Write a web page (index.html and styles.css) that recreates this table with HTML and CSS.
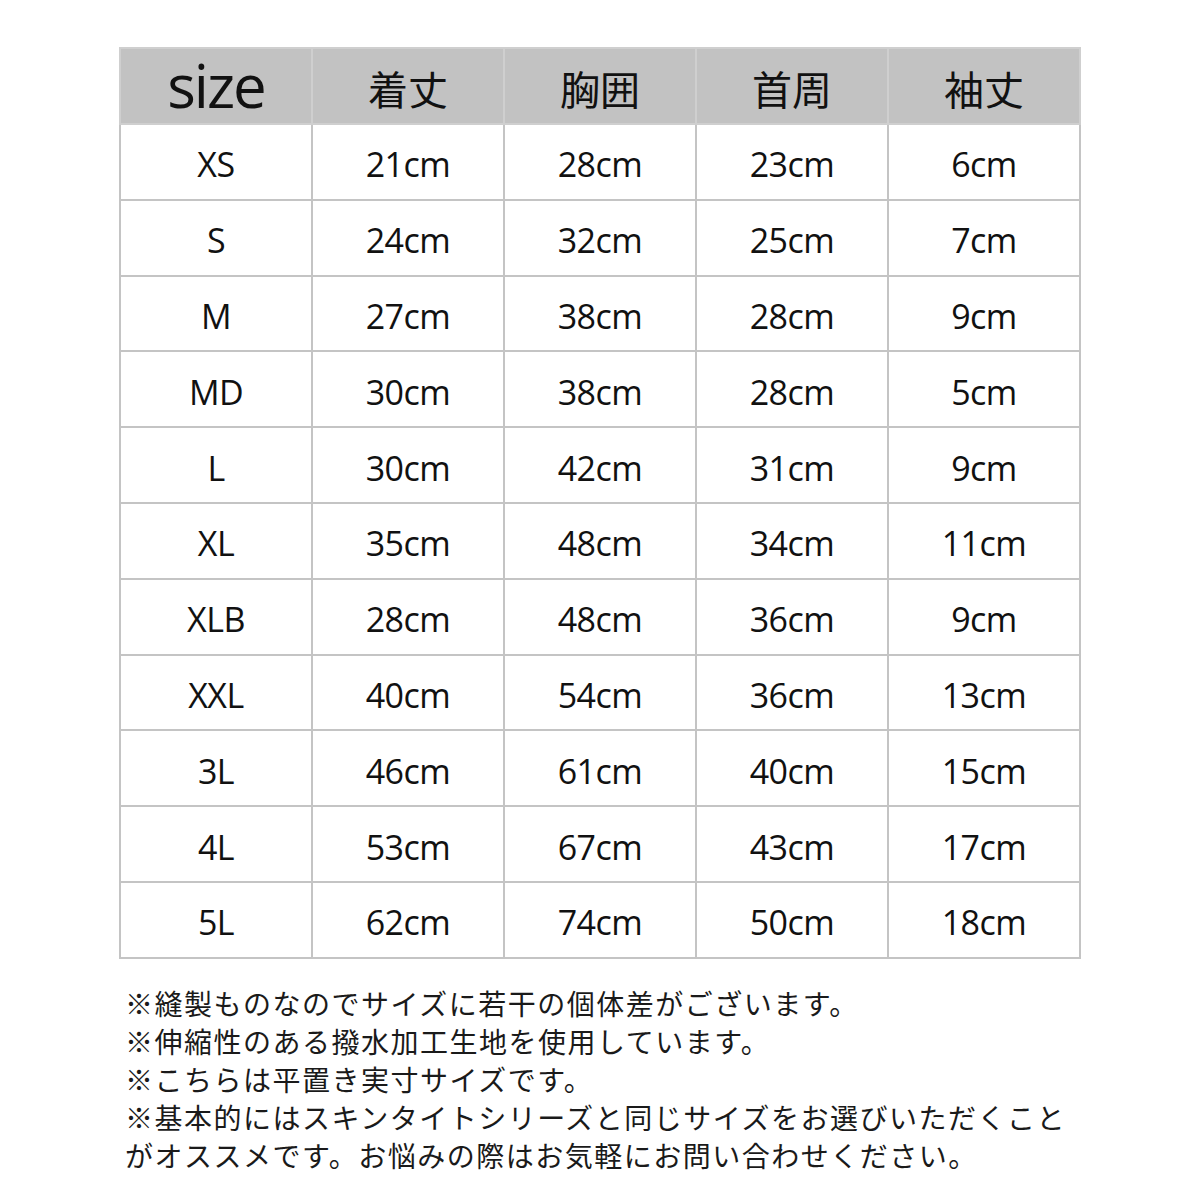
FILE: index.html
```html
<!DOCTYPE html>
<html lang="ja">
<head>
<meta charset="utf-8">
<title>サイズ表</title>
<link rel="stylesheet" href="styles.css">
</head>
<body>
<main class="page">
  <table class="size-table">
    <thead>
      <tr>
        <th class="h-size">size</th>
        <th>着丈</th>
        <th>胸囲</th>
        <th>首周</th>
        <th>袖丈</th>
      </tr>
    </thead>
    <tbody>
      <tr><td>XS</td><td>21cm</td><td>28cm</td><td>23cm</td><td>6cm</td></tr>
      <tr><td>S</td><td>24cm</td><td>32cm</td><td>25cm</td><td>7cm</td></tr>
      <tr><td>M</td><td>27cm</td><td>38cm</td><td>28cm</td><td>9cm</td></tr>
      <tr><td>MD</td><td>30cm</td><td>38cm</td><td>28cm</td><td>5cm</td></tr>
      <tr><td>L</td><td>30cm</td><td>42cm</td><td>31cm</td><td>9cm</td></tr>
      <tr><td>XL</td><td>35cm</td><td>48cm</td><td>34cm</td><td>11cm</td></tr>
      <tr><td>XLB</td><td>28cm</td><td>48cm</td><td>36cm</td><td>9cm</td></tr>
      <tr><td>XXL</td><td>40cm</td><td>54cm</td><td>36cm</td><td>13cm</td></tr>
      <tr><td>3L</td><td>46cm</td><td>61cm</td><td>40cm</td><td>15cm</td></tr>
      <tr><td>4L</td><td>53cm</td><td>67cm</td><td>43cm</td><td>17cm</td></tr>
      <tr><td>5L</td><td>62cm</td><td>74cm</td><td>50cm</td><td>18cm</td></tr>
    </tbody>
  </table>
  <div class="notes">
    <p>※縫製ものなのでサイズに若干の個体差がございます。</p>
    <p>※伸縮性のある撥水加工生地を使用しています。</p>
    <p>※こちらは平置き実寸サイズです。</p>
    <p>※基本的にはスキンタイトシリーズと同じサイズをお選びいただくこと<br>がオススメです。お悩みの際はお気軽にお問い合わせください。</p>
  </div>
</main>
</body>
</html>
```
FILE: styles.css
```css
html, body {
  margin: 0;
  padding: 0;
  background: #ffffff;
}

.page {
  padding: 47px 0 0 119px;
  color: #111111;
}

.size-table {
  border-collapse: collapse;
  table-layout: fixed;
  width: 962px;
  font-family: "Open Sans", "Noto Sans CJK JP", sans-serif;
}

.size-table th,
.size-table td {
  border: 2px solid #c4c4c4;
  text-align: center;
  vertical-align: middle;
  padding: 0;
  width: 20%;
}

.size-table th {
  background: #c2c2c2;
  border-color: #cfcfcf;
  height: 70px;
  font-family: "Noto Sans CJK JP", sans-serif;
  font-weight: 400;
  font-size: 40px;
  line-height: 1;
  padding-top: 4px;
}

.size-table th.h-size {
  font-family: "Open Sans", sans-serif;
  font-size: 60px;
  letter-spacing: -2px;
  padding-top: 0;
  height: 72px;
  padding-bottom: 2px;
}

.size-table td {
  height: 68.8px;
  font-size: 34px;
  line-height: 1;
  padding-top: 5px;
  letter-spacing: -0.5px;
}

.notes {
  margin-top: 25px;
  padding-left: 6px;
  font-family: "Noto Sans CJK JP", sans-serif;
  font-size: 28px;
  letter-spacing: 1.5px;
  line-height: 38px;
  color: #1a1a1a;
}

.notes p {
  margin: 0;
}
```
